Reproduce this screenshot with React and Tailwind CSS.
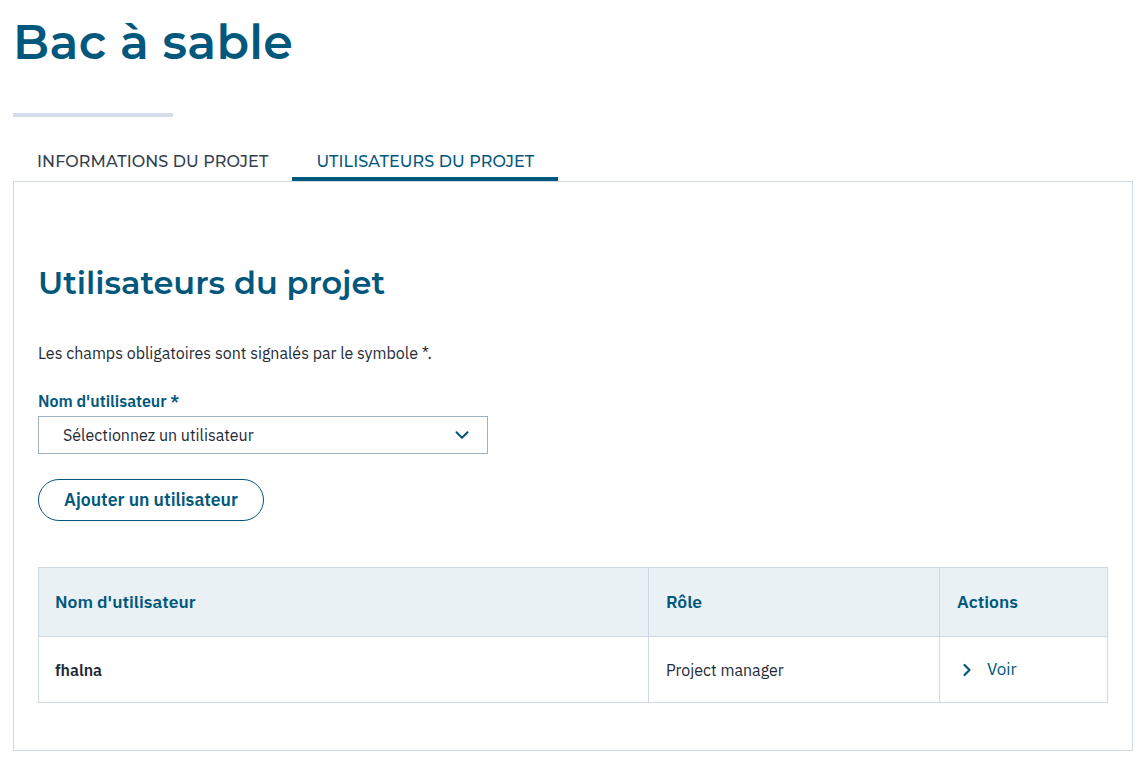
import { ChevronDown, ChevronRight } from "lucide-react";

const HEAD = { fontFamily: "Montserrat, Inter, 'Noto Sans', sans-serif" };
const BODY = { fontFamily: "'IBM Plex Sans', Roboto, 'Noto Sans', sans-serif" };

export default function App() {
  return (
    <div className="min-h-screen bg-white px-[13px] pb-4 text-[#1f2a37]" style={BODY}>
      <h1
        className="pt-[12px] text-[47.5px] font-semibold leading-[60px] tracking-[0.3px] text-[#02587c]"
        style={HEAD}
      >
        Bac à sable
      </h1>
      <div className="mt-[41px] h-[4px] w-[160px] bg-[#d5dde8]" />

      {/* Tabs */}
      <div className="mt-[32px] flex" style={HEAD}>
        <button className="h-[32px] border-b-4 border-transparent px-[24px] pb-[2px] text-[16px] font-medium uppercase leading-[20px] tracking-[0.1px] text-[#333f4d]">
          Informations du projet
        </button>
        <button className="h-[32px] border-b-4 border-[#02587c] px-[24px] pb-[2px] text-[16px] font-medium uppercase leading-[20px] tracking-[0.1px] text-[#02587c]">
          Utilisateurs du projet
        </button>
      </div>

      <section className="w-[1120px] border border-[#d0d9e3] px-[24px] pb-[47px] pt-[81px]">
        <h2 className="text-[32px] font-semibold leading-[40px] text-[#02587c]" style={HEAD}>
          Utilisateurs du projet
        </h2>
        <p className="mt-[40px] text-[16px] leading-[20px] text-[#1f2a37]">
          Les champs obligatoires sont signalés par le symbole *.
        </p>

        <label className="mt-[28px] block text-[16px] font-semibold leading-[20px] text-[#02587c]">
          Nom d'utilisateur *
        </label>
        <div className="mt-[5px] flex h-[38px] w-[450px] items-center justify-between border border-[#9fb0c0] pl-[24px] pr-[14px] text-[16px] text-[#1f2a37]">
          <span>Sélectionnez un utilisateur</span>
          <ChevronDown className="h-[22px] w-[22px] text-[#02587c]" strokeWidth={2.2} />
        </div>

        <button className="mt-[25px] h-[42px] rounded-full border border-[#02587c] px-[25px] text-[17.7px] font-semibold text-[#02587c]">
          Ajouter un utilisateur
        </button>

        <table className="mt-[46px] w-[1070px] border-collapse border border-[#d0d9e3] text-left">
          <thead>
            <tr className="bg-[#e9f1f5]">
              <th className="h-[69px] w-[610px] border border-[#d0d9e3] px-[16px] text-[17.5px] font-semibold text-[#02587c]">
                Nom d'utilisateur
              </th>
              <th className="h-[69px] w-[291px] border border-[#d0d9e3] px-[17px] text-[17.5px] font-semibold text-[#02587c]">
                Rôle
              </th>
              <th className="h-[69px] border border-[#d0d9e3] px-[17px] text-[17.5px] font-semibold text-[#02587c]">
                Actions
              </th>
            </tr>
          </thead>
          <tbody>
            <tr>
              <td className="h-[66px] border border-[#d0d9e3] px-[16px] text-[16px] font-semibold text-[#1f2a37]">
                fhalna
              </td>
              <td className="h-[66px] border border-[#d0d9e3] px-[17px] text-[16px] text-[#1f2a37]">
                Project manager
              </td>
              <td className="h-[66px] border border-[#d0d9e3] px-[17px]">
                <a className="flex items-center gap-[10px] text-[17px] text-[#02587c]">
                  <ChevronRight className="h-[20px] w-[20px]" strokeWidth={2.6} />
                  Voir
                </a>
              </td>
            </tr>
          </tbody>
        </table>
      </section>
    </div>
  );
}
